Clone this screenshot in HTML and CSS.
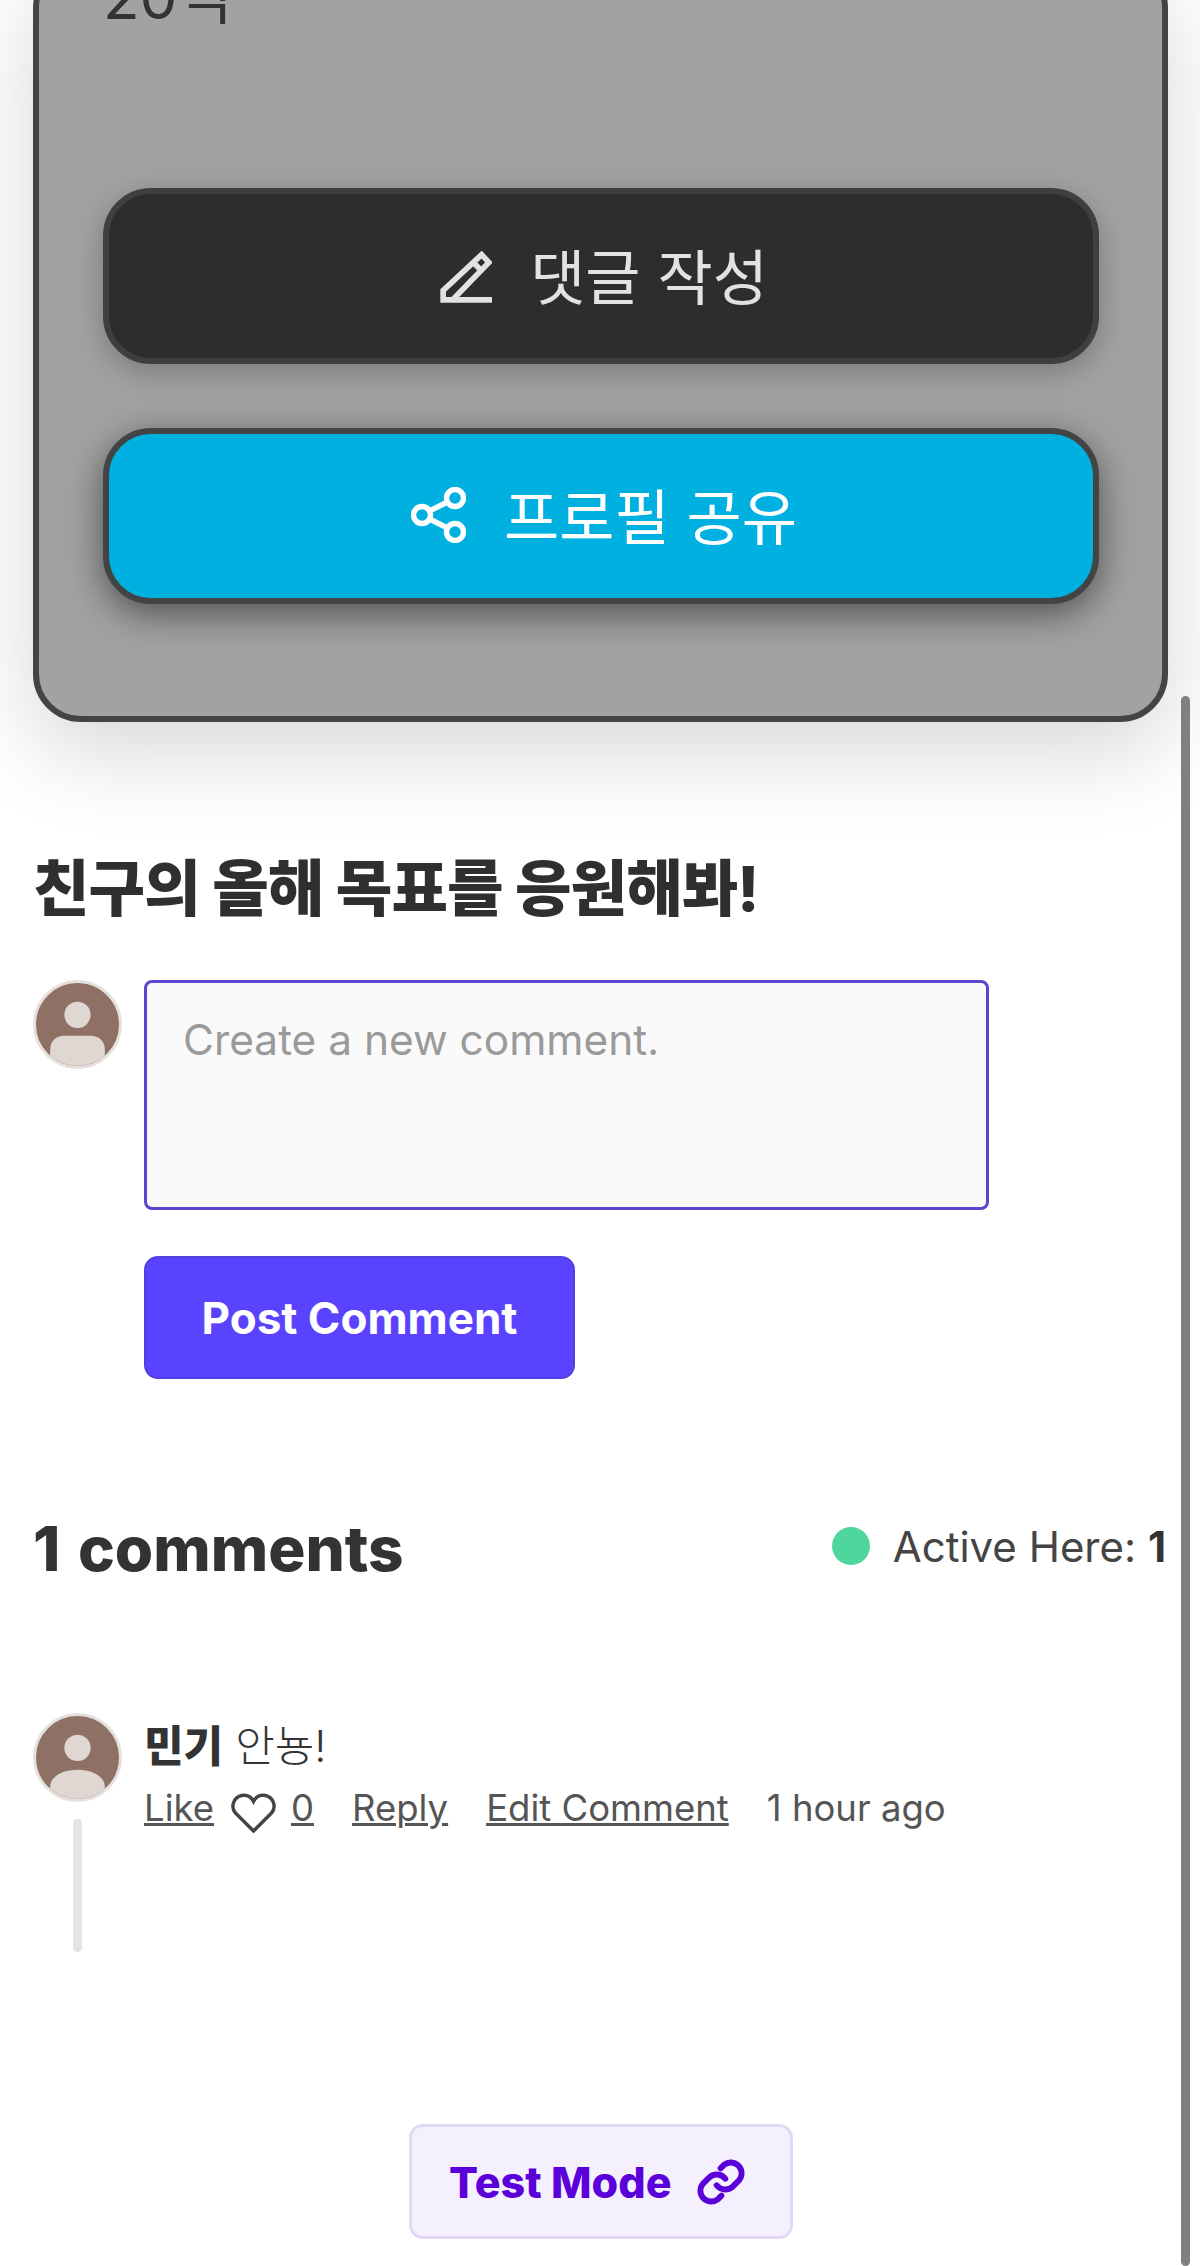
FILE: index.html
```html
<!DOCTYPE html>
<html lang="ko">
<head>
<meta charset="UTF-8">
<title>Profile</title>
<link rel="stylesheet" href="styles.css">
</head>
<body>
    <div class="scrollbar"></div>

    <section class="card">
        <p class="card-count">20억</p>
        <a class="big-btn dark">
            <svg class="pencil" viewBox="0 0 50 50" fill="none" stroke="#e2e2e2" stroke-width="5.400"><path d="M3 47V38L40 3.500l7 7.500L12 47zM12 47h38M32 11l8 8"/></svg>
            댓글 작성
        </a>
        <a class="big-btn blue">
            <svg class="share" viewBox="0 0 55 56" fill="none" stroke="#fff" stroke-width="5.400"><circle cx="44" cy="11" r="8.500"/><circle cx="11" cy="28" r="8.500"/><circle cx="44" cy="45" r="8.500"/><path d="M18.500 24l18-9M18.500 32l18 9"/></svg>
            프로필 공유
        </a>
    </section>

    <h2 class="cheer">친구의 올해 목표를 응원해봐!</h2>

    <form class="new-comment">
        <div class="avatar">
            <svg viewBox="0 0 82 82"><circle cx="41" cy="31.500" r="13" fill="#e0d6d2"/><path d="M14 82V66c0-9 6-14 14-14h26c8 0 14 5 14 14v16z" fill="#e0d6d2"/></svg>
        </div>
        <div class="form-main">
            <textarea placeholder="Create a new comment."></textarea>
            <button type="button" class="post-btn">Post Comment</button>
        </div>
    </form>

    <div class="comments-head">
        <h3>1 comments</h3>
        <div class="active"><span class="dot"></span>Active Here:&nbsp;<b>1</b></div>
    </div>

    <div class="comment">
        <div class="comment-side">
            <div class="avatar">
                <svg viewBox="0 0 82 82"><circle cx="41" cy="31.500" r="13" fill="#e0d6d2"/><path d="M14 82V70c0-10 12-17 27-17s27 7 27 17v12z" fill="#e0d6d2"/></svg>
            </div>
            <div class="thread-line"></div>
        </div>
        <div class="comment-main">
            <p class="comment-text"><b>민기</b> 안뇽!</p>
            <div class="comment-actions">
                <a>Like</a>
                <svg class="heart" viewBox="0 0 45 40" fill="none" stroke="#444" stroke-width="3.400"><path d="M22.500 38L4.500 20C-.5 14.500 2 4.500 10.500 2.500c5-1 9.500 1 12 6 2.500-5 7-7 12-6C43 4.500 45.500 14.500 40.500 20z"/></svg>
                <a class="like-count">0</a>
                <a>Reply</a>
                <a>Edit Comment</a>
                <span>1 hour ago</span>
            </div>
        </div>
    </div>

    <div class="test-wrap">
        <a class="test-mode">
            Test Mode
            <svg viewBox="0 0 24 24" fill="none" stroke="#5b00d9" stroke-width="2.700" stroke-linecap="round" stroke-linejoin="round"><path d="M10 13.500a5 5 0 0 0 7.500.5l3-3a5 5 0 0 0-7-7l-1.700 1.700"/><path d="M14 10.500a5 5 0 0 0-7.500-.5l-3 3a5 5 0 0 0 7 7l1.700-1.700"/></svg>
        </a>
    </div>
</body>
</html>
```

FILE: styles.css
```css
* {
    box-sizing: border-box;
}
html, body {
    height: 2266px;
    overflow: hidden;
}
body {
    margin: 0;
    padding: 0 32px 0 33px;
    position: relative;
    background: #fff;
    color: #333;
    font-family: Inter, "Noto Sans CJK KR", sans-serif;
}
svg {
    display: block;
}
.scrollbar {
    position: absolute;
    left: 1181px;
    top: 696px;
    bottom: 0;
    width: 9px;
    background: #808080;
    border-radius: 5px;
}

.card {
    margin-top: -40px;
    height: 762px;
    padding: 0 63px 0 64px;
    background: #a2a2a2;
    border: 6px solid #444;
    border-radius: 48px;
    box-shadow: 0 30px 90px rgba(0, 0, 0, 0.16);
}
.card-count {
    margin: 0;
    height: 222px;
    font-size: 60px;
    line-height: 62px;
    color: #333;
}
.big-btn {
    display: flex;
    align-items: center;
    justify-content: center;
    gap: 38px;
    height: 176px;
    margin-bottom: 64px;
    padding: 0 0 5px 6px;
    border-radius: 48px;
    font-size: 60px;
}
.pencil {
    width: 52px;
    height: 52px;
    margin-top: 6px;
}
.share {
    width: 55px;
    height: 56px;
    margin-top: 3px;
}
.dark {
    background: #2d2d2d;
    border: 6px solid #3f3f3f;
    color: #e2e2e2;
    box-shadow: 0 8px 30px rgba(0, 0, 0, 0.25);
}
.blue {
    background: #00b0e0;
    border: 6px solid #444;
    color: #fff;
    box-shadow: 0 10px 36px rgba(0, 0, 0, 0.5);
}

.cheer {
    margin: 130px 0 0;
    font-size: 61.500px;
    line-height: 74px;
    font-weight: 800;
    letter-spacing: -1px;
    color: #2f2f2f;
}

.avatar {
    width: 89px;
    height: 89px;
    flex: none;
    overflow: hidden;
    border-radius: 50%;
    background: #8e7065;
    border: 3px solid #e5e1df;
}

.new-comment {
    display: flex;
    gap: 22px;
    margin-top: 54px;
}
.form-main {
    width: 845px;
}
.form-main textarea {
    display: block;
    width: 100%;
    height: 230px;
    padding: 31px 36px;
    resize: none;
    background: #fafafa;
    border: 3px solid #5a46d0;
    border-radius: 8px;
    font: 42.400px Inter, sans-serif;
}
.form-main textarea::placeholder {
    color: #9a9a9a;
}
.post-btn {
    display: block;
    width: 431px;
    height: 123px;
    margin-top: 46px;
    background: #5a43ff;
    border: 2px solid #5040e0;
    border-radius: 14px;
    color: #fff;
    font: 700 44px Inter, sans-serif;
}

.comments-head {
    display: flex;
    align-items: center;
    justify-content: space-between;
    margin-top: 129px;
}
.comments-head h3 {
    margin: 0;
    font-size: 62px;
    line-height: 82px;
    font-weight: 800;
    word-spacing: 4px;
    color: #333;
}
.active {
    display: flex;
    align-items: center;
    margin-right: 2px;
    padding-bottom: 6px;
    font-size: 42px;
    color: #444;
}
.active b {
    color: #333;
}
.dot {
    width: 38px;
    height: 38px;
    margin-right: 23px;
    border-radius: 50%;
    background: #4fd69c;
}

.comment {
    display: flex;
    gap: 22px;
    margin-top: 123px;
}
.comment-side {
    flex: none;
    width: 89px;
}
.thread-line {
    width: 9px;
    height: 133px;
    margin: 17px auto 0;
    background: #e4e4e4;
    border-radius: 5px;
}
.comment-text {
    margin: 4px 0 0;
    font-size: 43px;
    line-height: 58px;
    font-weight: 300;
}
.comment-text b {
    font-weight: 800;
}
.comment-actions {
    display: flex;
    align-items: center;
    margin-top: 8px;
    font-size: 36.500px;
    color: #555;
}
.comment-actions a {
    margin-right: 38px;
    text-decoration: underline;
    text-decoration-thickness: 3px;
}
.comment-actions a:first-child {
    margin-right: 17px;
}
.heart {
    width: 45px;
    height: 40px;
    margin: 10px 15px 0 0;
}

.test-wrap {
    display: flex;
    justify-content: center;
    margin-top: 172px;
    padding-left: 1px;
}
.test-mode {
    display: flex;
    align-items: center;
    gap: 24px;
    width: 384px;
    height: 115px;
    padding-left: 37px;
    background: #f4f0fe;
    border: 3px solid #e2d8f5;
    border-radius: 14px;
    font-size: 43px;
    font-weight: 800;
    color: #5b00d9;
}
.test-mode svg {
    width: 52px;
    height: 52px;
}
```
